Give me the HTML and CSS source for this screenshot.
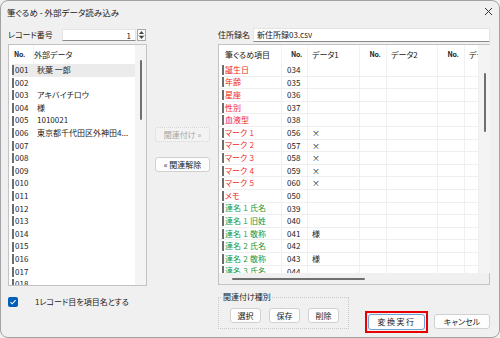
FILE: index.html
```html
<!DOCTYPE html>
<html lang="ja">
<head>
  <meta charset="UTF-8">
  <title>筆ぐるめ - 外部データ読み込み</title>
  <link rel="stylesheet" href="styles.css">
</head>
<body>
  <div class="window">
    <div class="titlebar">
      <span class="title">筆ぐるめ - 外部データ読み込み</span>
      <svg class="close" width="9" height="9" viewBox="0 0 9 9"><path d="M1 1L8 8M8 1L1 8" stroke="#333" stroke-width="1"/></svg>
    </div>

    <div class="content">
      <div class="field">
        <span class="field-label left-label">レコード番号</span>
        <div class="input num">1</div>
        <div class="spinner">
          <span><svg width="5" height="3" viewBox="0 0 5 3"><path d="M0 3L2.5 0L5 3Z" fill="#444"/></svg></span>
          <span><svg width="5" height="3" viewBox="0 0 5 3"><path d="M0 0L2.5 3L5 0Z" fill="#444"/></svg></span>
        </div>
      </div>
      <div></div>
      <div class="field">
        <span class="field-label right-label">住所録名</span>
        <div class="input text">新住所録03.csv</div>
      </div>

      <div class="listbox">
        <div class="list-main">
          <div class="list-head">
            <span class="lc-no head-no">No.</span>
            <span class="lc-data">外部データ</span>
          </div>
          <div class="list-row selected"><span class="lc-no">001</span><span class="lc-data">秋葉 一郎</span></div>
          <div class="list-row"><span class="lc-no">002</span><span class="lc-data"></span></div>
          <div class="list-row"><span class="lc-no">003</span><span class="lc-data">アキバイチロウ</span></div>
          <div class="list-row"><span class="lc-no">004</span><span class="lc-data">様</span></div>
          <div class="list-row"><span class="lc-no">005</span><span class="lc-data">1010021</span></div>
          <div class="list-row"><span class="lc-no">006</span><span class="lc-data">東京都千代田区外神田4...</span></div>
          <div class="list-row"><span class="lc-no">007</span><span class="lc-data"></span></div>
          <div class="list-row"><span class="lc-no">008</span><span class="lc-data"></span></div>
          <div class="list-row"><span class="lc-no">009</span><span class="lc-data"></span></div>
          <div class="list-row"><span class="lc-no">010</span><span class="lc-data"></span></div>
          <div class="list-row"><span class="lc-no">011</span><span class="lc-data"></span></div>
          <div class="list-row"><span class="lc-no">012</span><span class="lc-data"></span></div>
          <div class="list-row"><span class="lc-no">013</span><span class="lc-data"></span></div>
          <div class="list-row"><span class="lc-no">014</span><span class="lc-data"></span></div>
          <div class="list-row"><span class="lc-no">015</span><span class="lc-data"></span></div>
          <div class="list-row"><span class="lc-no">016</span><span class="lc-data"></span></div>
          <div class="list-row"><span class="lc-no">017</span><span class="lc-data"></span></div>
          <div class="list-row"><span class="lc-no">018</span><span class="lc-data"></span></div>
        </div>
        <div class="vscroll left-scroll"><div class="vthumb"></div></div>
      </div>

      <div class="middle">
        <div class="btn disabled">関連付け »</div>
        <div class="btn">« 関連解除</div>
      </div>

      <div class="gridbox">
        <div class="grid-main">
          <div class="grid-head">
            <span class="gc c1">筆ぐるめ項目</span>
            <span class="gc c2 head-no">No.</span>
            <span class="gc c3">データ1</span>
            <span class="gc c4 head-no">No.</span>
            <span class="gc c5">データ2</span>
            <span class="gc c6 head-no">No.</span>
            <span class="gc c7">データ3</span>
          </div>
          <div class="grid-row red"><span class="gc c1">誕生日</span><span class="gc c2">034</span><span class="gc c3"></span><span class="gc c4"></span><span class="gc c5"></span><span class="gc c6"></span><span class="gc c7"></span></div>
          <div class="grid-row red"><span class="gc c1">年齢</span><span class="gc c2">035</span><span class="gc c3"></span><span class="gc c4"></span><span class="gc c5"></span><span class="gc c6"></span><span class="gc c7"></span></div>
          <div class="grid-row red"><span class="gc c1">星座</span><span class="gc c2">036</span><span class="gc c3"></span><span class="gc c4"></span><span class="gc c5"></span><span class="gc c6"></span><span class="gc c7"></span></div>
          <div class="grid-row red"><span class="gc c1">性別</span><span class="gc c2">037</span><span class="gc c3"></span><span class="gc c4"></span><span class="gc c5"></span><span class="gc c6"></span><span class="gc c7"></span></div>
          <div class="grid-row red"><span class="gc c1">血液型</span><span class="gc c2">038</span><span class="gc c3"></span><span class="gc c4"></span><span class="gc c5"></span><span class="gc c6"></span><span class="gc c7"></span></div>
          <div class="grid-row red"><span class="gc c1">マーク<span class="fw">１</span></span><span class="gc c2">056</span><span class="gc c3">×</span><span class="gc c4"></span><span class="gc c5"></span><span class="gc c6"></span><span class="gc c7"></span></div>
          <div class="grid-row red"><span class="gc c1">マーク<span class="fw">２</span></span><span class="gc c2">057</span><span class="gc c3">×</span><span class="gc c4"></span><span class="gc c5"></span><span class="gc c6"></span><span class="gc c7"></span></div>
          <div class="grid-row red"><span class="gc c1">マーク<span class="fw">３</span></span><span class="gc c2">058</span><span class="gc c3">×</span><span class="gc c4"></span><span class="gc c5"></span><span class="gc c6"></span><span class="gc c7"></span></div>
          <div class="grid-row red"><span class="gc c1">マーク<span class="fw">４</span></span><span class="gc c2">059</span><span class="gc c3">×</span><span class="gc c4"></span><span class="gc c5"></span><span class="gc c6"></span><span class="gc c7"></span></div>
          <div class="grid-row red"><span class="gc c1">マーク<span class="fw">５</span></span><span class="gc c2">060</span><span class="gc c3">×</span><span class="gc c4"></span><span class="gc c5"></span><span class="gc c6"></span><span class="gc c7"></span></div>
          <div class="grid-row red"><span class="gc c1">メモ</span><span class="gc c2">050</span><span class="gc c3"></span><span class="gc c4"></span><span class="gc c5"></span><span class="gc c6"></span><span class="gc c7"></span></div>
          <div class="grid-row green"><span class="gc c1">連名<span class="fw">１</span>氏名</span><span class="gc c2">039</span><span class="gc c3"></span><span class="gc c4"></span><span class="gc c5"></span><span class="gc c6"></span><span class="gc c7"></span></div>
          <div class="grid-row green"><span class="gc c1">連名<span class="fw">１</span>旧姓</span><span class="gc c2">040</span><span class="gc c3"></span><span class="gc c4"></span><span class="gc c5"></span><span class="gc c6"></span><span class="gc c7"></span></div>
          <div class="grid-row green"><span class="gc c1">連名<span class="fw">１</span>敬称</span><span class="gc c2">041</span><span class="gc c3">様</span><span class="gc c4"></span><span class="gc c5"></span><span class="gc c6"></span><span class="gc c7"></span></div>
          <div class="grid-row green"><span class="gc c1">連名<span class="fw">２</span>氏名</span><span class="gc c2">042</span><span class="gc c3"></span><span class="gc c4"></span><span class="gc c5"></span><span class="gc c6"></span><span class="gc c7"></span></div>
          <div class="grid-row green"><span class="gc c1">連名<span class="fw">２</span>敬称</span><span class="gc c2">043</span><span class="gc c3">様</span><span class="gc c4"></span><span class="gc c5"></span><span class="gc c6"></span><span class="gc c7"></span></div>
          <div class="grid-row green"><span class="gc c1">連名<span class="fw">３</span>氏名</span><span class="gc c2">044</span><span class="gc c3"></span><span class="gc c4"></span><span class="gc c5"></span><span class="gc c6"></span><span class="gc c7"></span></div>
        </div>
        <div class="vscroll right-scroll"><div class="vthumb"></div></div>
        <div class="hscroll"><div class="hthumb"></div></div>
        <div class="corner"></div>
      </div>

      <div class="check-row">
        <span class="checkbox">
          <svg width="8" height="8" viewBox="0 0 8 8"><path d="M1.5 4.2L3.2 5.8L6.6 2.2" fill="none" stroke="#fff" stroke-width="1.1"/></svg>
        </span>
        <span class="check-label">1レコード目を項目名とする</span>
      </div>
      <div></div>
      <div class="actions">
        <fieldset class="group">
          <legend>関連付け種別</legend>
          <div class="group-buttons">
            <div class="btn small">選択</div>
            <div class="btn small">保存</div>
            <div class="btn small">削除</div>
          </div>
        </fieldset>
        <div class="highlight">
          <div class="btn default">変換実行</div>
        </div>
        <div class="btn cancel">キャンセル</div>
      </div>
    </div>
  </div>
</body>
</html>
```

FILE: styles.css
```css
* {
  box-sizing: border-box;
  margin: 0;
  padding: 0;
}

body {
  margin: 0;
  background: #f0f0f0;
  font-family: "Noto Sans CJK JP", "Noto Sans", sans-serif;
  font-size: 8px;
  font-feature-settings: "palt";
  color: #1b1b1b;
}

.window {
  width: 500px;
  height: 338px;
  border: 1px solid #a3a3a3;
  border-radius: 8px;
  background: #f0f0f0;
  overflow: hidden;
}

.titlebar {
  height: 21px;
  display: flex;
  align-items: center;
  justify-content: space-between;
  padding: 0 6px 0 6px;
}

.title {
  font-size: 8.5px;
  line-height: 12px;
}

.content {
  display: grid;
  grid-template-columns: 139px 71px 272px;
  grid-template-rows: 14px 242px 1fr;
  row-gap: 2px;
  padding: 6px 9px 0 7px;
  height: 315px;
}

/* top fields */
.field {
  display: flex;
  align-items: center;
}

.field-label {
  line-height: 12px;
}

.left-label {
  width: 54px;
}

.right-label {
  width: 35px;
}

.input {
  background: #fff;
  border: 1px solid #e4e4e4;
  border-bottom-color: #8a8a8a;
  line-height: 11px;
}

.input.num {
  width: 74px;
  height: 12px;
  text-align: right;
  padding-right: 4px;
}

.input.text {
  flex: 1;
  height: 14px;
  line-height: 12px;
  padding-left: 3px;
}

.spinner {
  width: 9px;
  height: 12px;
  margin-left: 1px;
  display: flex;
  flex-direction: column;
  border: 1px solid #a8a8a8;
  background: #fbfbfb;
}

.spinner span {
  flex: 1;
  display: flex;
  align-items: center;
  justify-content: center;
}

.spinner span + span {
  border-top: 1px solid #c4c4c4;
}

/* left list */
.listbox {
  display: flex;
  border: 1px solid #c3c3c3;
  background: #fff;
  overflow: hidden;
}

.list-main {
  flex: 1;
  overflow: hidden;
  padding-left: 3px;
}

.list-head {
  height: 19px;
  display: flex;
  align-items: center;
}

.list-head .lc-no {
  height: 19px;
  line-height: 19px;
  border-right: 1px solid #f0f0f0;
}

.head-no {
  font-size: 7px;
  font-weight: 600;
  letter-spacing: -0.3px;
  padding-left: 2px;
}

.list-row {
  height: 12.6px;
  line-height: 12.6px;
  display: flex;
  align-items: center;
  white-space: nowrap;
}

.list-row::before {
  content: "";
  width: 2px;
  height: 10px;
  background: #6d6d6d;
  margin-right: 1px;
}

.list-row.selected {
  background: #ebebeb;
}

.lc-no {
  width: 22px;
}

.vscroll {
  width: 11px;
  background: #f4f4f4;
}

.vthumb {
  width: 2px;
  margin: 0 auto;
  background: #6f6f6f;
  border-radius: 1px;
}

.left-scroll .vthumb {
  margin-top: 15px;
  height: 60px;
}

/* middle */
.middle {
  display: flex;
  flex-direction: column;
  align-items: center;
  padding-top: 83px;
  gap: 15px;
}

.btn {
  height: 15px;
  line-height: 13px;
  background: #fdfdfd;
  border: 1px solid #d0d0d0;
  border-radius: 3px;
  text-align: center;
  white-space: nowrap;
}

.middle .btn {
  width: 55px;
}

.btn.disabled {
  color: #a5a5a5;
  background: #f3f3f3;
  border: 1px dotted #d6d6d6;
}

/* right grid */
.gridbox {
  display: grid;
  grid-template-columns: 260px 10px;
  grid-template-rows: 1fr 11px;
  border: 1px solid #c3c3c3;
  background: #f0f0f0;
  height: 241px;
}

.grid-main {
  background: #fff;
  overflow: hidden;
}

.grid-head,
.grid-row {
  display: grid;
  grid-template-columns: 63px 26px 52px 27px 51px 27px 14px;
  white-space: nowrap;
}

.grid-head {
  height: 19px;
  line-height: 19px;
}

.grid-head .gc {
  border-right: 1px solid #f2f2f2;
}

.grid-head .c1 {
  padding-left: 6px;
}

.grid-head .head-no {
  text-align: center;
}

.grid-row {
  height: 12.6px;
  line-height: 12px;
  border-bottom: 1px solid #efefef;
}

.gc {
  overflow: hidden;
  padding-left: 4px;
}

.grid-row .gc {
  border-right: 1.5px solid #f0f0f0;
}

.grid-row .c1 {
  display: flex;
  align-items: center;
  padding-left: 3px;
}

.grid-row .c1::before {
  content: "";
  width: 2px;
  height: 10px;
  background: #6d6d6d;
  margin-right: 1px;
}

.fw {
  font-feature-settings: normal;
  font-size: 7px;
  padding: 0 1px;
}

.grid-row .c2 {
  padding-left: 5px;
}

.grid-row.red .c1 {
  color: #f01c1c;
}

.grid-row.green .c1 {
  color: #20973a;
}

.right-scroll .vthumb {
  margin-top: 28px;
  height: 59px;
}

.hscroll {
  display: flex;
  align-items: center;
  padding-left: 13px;
}

.hthumb {
  width: 133px;
  height: 2px;
  background: #6f6f6f;
  border-radius: 1px;
}

/* bottom */
.check-row {
  display: flex;
  align-items: center;
  padding-top: 6px;
  height: 21px;
}

.checkbox {
  width: 10px;
  height: 10px;
  border-radius: 2px;
  background: #005fb8;
  display: flex;
  align-items: center;
  justify-content: center;
}

.check-label {
  margin-left: 17px;
  line-height: 12px;
}

.actions {
  display: flex;
  align-items: flex-start;
}

.group {
  width: 131px;
  margin-top: 3px;
  border: 1px dotted #c8c8c8;
  padding: 0 9px 5px 11px;
}

.group legend {
  margin-left: -8px;
  padding: 0 1px;
  line-height: 12px;
}

.group-buttons {
  display: flex;
  gap: 8px;
  margin-top: 5px;
}

.btn.small {
  width: 31px;
}

.highlight {
  margin-left: 16px;
  margin-top: 23px;
  border: 2px solid #ea0000;
  padding: 1px;
  width: 63px;
}

.btn.default {
  height: 16px;
  line-height: 14px;
  border-color: #6aa3d8;
  letter-spacing: 1.5px;
}

.btn.cancel {
  width: 56px;
  margin-left: 6px;
  margin-top: 26px;
}
```
